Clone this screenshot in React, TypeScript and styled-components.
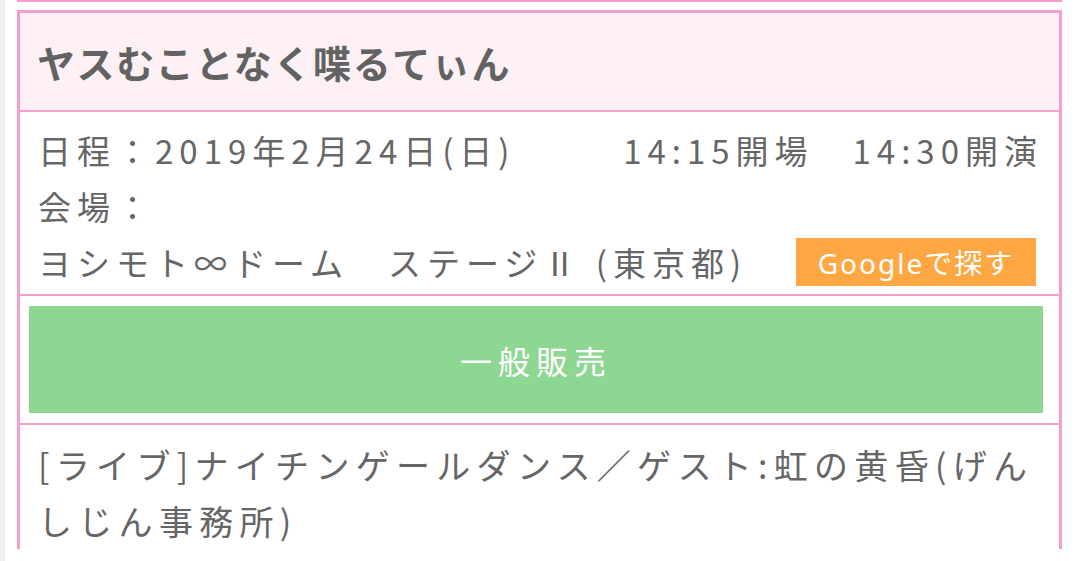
import styled, { createGlobalStyle } from "styled-components";

const GlobalStyle = createGlobalStyle`
  html, body {
    margin: 0;
    padding: 0;
    background: #efefef;
  }
  body {
    font-family: "Noto Sans CJK JP", "Noto Sans", sans-serif;
    color: #666;
  }
`;

const PINK = "#f4a0ca";

const Page = styled.div`
  margin-left: 5px;
  min-height: 561px;
  background: #fff;
  padding: 0 13px 0 12px;
`;

const PrevEdge = styled.div`
  height: 2px;
  background: ${PINK};
  margin-bottom: 8px;
`;

const Card = styled.section`
  border: 3px solid ${PINK};
  border-bottom: none;
`;

const Row = styled.div<{ $tint?: boolean }>`
  background: ${(p) => (p.$tint ? "#fdf1f6" : "#fff")};
  & + & {
    border-top: 2px solid ${PINK};
  }
`;

const Title = styled.h2`
  margin: 0;
  height: 97px;
  display: flex;
  align-items: center;
  padding-left: 17px;
  font-size: 38px;
  font-weight: 700;
  letter-spacing: 1.6px;
  color: #626262;
`;

const Info = styled.div`
  padding: 10px 16px 4px 18px;
  font-size: 33px;
  letter-spacing: 6px;
`;

const InfoLine = styled.div`
  display: flex;
  align-items: center;
  justify-content: space-between;
  height: 56px;
  white-space: nowrap;
`;

const MapButton = styled.a`
  display: inline-flex;
  align-items: center;
  justify-content: center;
  width: 240px;
  height: 48px;
  margin-right: 7px;
  background: #ffa843;
  color: #fff;
  font-family: "Noto Sans", "Noto Sans CJK JP", sans-serif;
  font-size: 28px;
  letter-spacing: 2px;
  text-decoration: none;
`;

const SaleWrap = styled.div`
  padding: 10px 16px 10px 9px;
`;

const SaleButton = styled.button`
  display: flex;
  align-items: center;
  justify-content: center;
  width: 100%;
  height: 107px;
  border: none;
  background: #8ed793;
  color: #fff;
  font-family: "Noto Sans CJK JP", sans-serif;
  font-size: 32px;
  letter-spacing: 6px;
  cursor: pointer;
`;

const Description = styled.p`
  margin: 0;
  padding: 12px 12px 0 18px;
  font-size: 34px;
  line-height: 56px;
  letter-spacing: 6.3px;
`;

export default function App() {
  return (
    <>
      <GlobalStyle />
      <Page>
        <PrevEdge />
        <Card>
          <Row $tint>
            <Title>ヤスむことなく喋るてぃん</Title>
          </Row>
          <Row>
            <Info>
              <InfoLine>
                <span>日程：2019年2月24日(日)</span>
                <span>14:15開場　14:30開演</span>
              </InfoLine>
              <InfoLine>
                <span>会場：</span>
              </InfoLine>
              <InfoLine>
                <span>ヨシモト∞ドーム　ステージⅡ (東京都)</span>
                <MapButton href="#">Googleで探す</MapButton>
              </InfoLine>
            </Info>
          </Row>
          <Row>
            <SaleWrap>
              <SaleButton type="button">一般販売</SaleButton>
            </SaleWrap>
          </Row>
          <Row>
            <Description>
              [ライブ]ナイチンゲールダンス／ゲスト:虹の黄昏(げんしじん事務所)
            </Description>
          </Row>
        </Card>
      </Page>
    </>
  );
}
